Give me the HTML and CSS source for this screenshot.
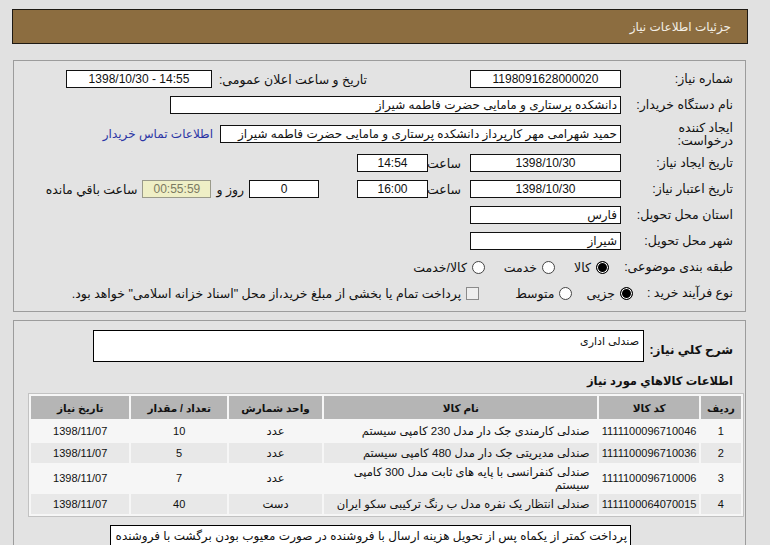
FILE: index.html
```html
<!DOCTYPE html>
<html lang="fa" dir="rtl">
<head>
<meta charset="utf-8">
<title>جزئیات اطلاعات نیاز</title>
<link rel="stylesheet" href="styles.css">
</head>
<body>
<div class="page">
  <div class="titlebar">جزئیات اطلاعات نیاز</div>

  <div class="panel info">
    <div class="row">
      <div class="lbl">شماره نیاز:</div>
      <div class="box w150 center">1198091628000020</div>
      <div class="lbl2">تاریخ و ساعت اعلان عمومی:</div>
      <div class="box w145 center ltr">1398/10/30 - 14:55</div>
    </div>
    <div class="row">
      <div class="lbl">نام دستگاه خریدار:</div>
      <div class="box w450">دانشکده پرستاری و مامایی حضرت فاطمه شیراز</div>
    </div>
    <div class="row tall">
      <div class="lbl two-line">ایجاد کننده<br>درخواست:</div>
      <div class="box w400">حمید شهرامی مهر کارپرداز دانشکده پرستاری و مامایی حضرت فاطمه شیراز</div>
      <a class="link" href="#">اطلاعات تماس خریدار</a>
    </div>
    <div class="row">
      <div class="lbl">تاریخ ایجاد نیاز:</div>
      <div class="box w150 center">1398/10/30</div>
      <div class="sep">ساعت</div>
      <div class="box w70 center">14:54</div>
    </div>
    <div class="row">
      <div class="lbl">تاریخ اعتبار نیاز:</div>
      <div class="box w150 center">1398/10/30</div>
      <div class="sep">ساعت</div>
      <div class="box w70 center">16:00</div>
      <div class="box w69 center days">0</div>
      <div class="txt">روز و</div>
      <div class="box remain center">00:55:59</div>
      <div class="txt">ساعت باقي مانده</div>
    </div>
    <div class="row">
      <div class="lbl">استان محل تحویل:</div>
      <div class="box w150">فارس</div>
    </div>
    <div class="row">
      <div class="lbl">شهر محل تحویل:</div>
      <div class="box w150">شیراز</div>
    </div>
    <div class="row">
      <div class="lbl cat">طبقه بندی موضوعی:</div>
      <div class="opt"><span class="radio on"></span>کالا</div>
      <div class="opt"><span class="radio"></span>خدمت</div>
      <div class="opt"><span class="radio"></span>کالا/خدمت</div>
    </div>
    <div class="row">
      <div class="lbl proc">نوع فرآیند خرید :</div>
      <div class="opt tight"><span class="radio on"></span>جزیی</div>
      <div class="opt"><span class="radio"></span>متوسط</div>
      <div class="opt wide"><span class="check"></span>پرداخت تمام یا بخشی از مبلغ خرید،از محل "اسناد خزانه اسلامی" خواهد بود.</div>
    </div>
  </div>

  <div class="panel items">
    <div class="descrow">
      <div class="dlbl">شرح کلي نیاز:</div>
      <div class="descbox">صندلی اداری</div>
    </div>
    <div class="heading">اطلاعات کالاهاي مورد نیاز</div>
    <table class="grid">
      <thead>
        <tr>
          <th class="c-idx">ردیف</th>
          <th class="c-code">کد کالا</th>
          <th class="c-name">نام کالا</th>
          <th class="c-unit">واحد شمارش</th>
          <th class="c-qty">تعداد / مقدار</th>
          <th class="c-date">تاریخ نیاز</th>
        </tr>
      </thead>
      <tbody>
        <tr class="odd">
          <td>1</td>
          <td class="code">1111100096710046</td>
          <td class="name">صندلی کارمندی جک دار مدل 230 کامپی سیستم</td>
          <td class="unit">عدد</td>
          <td>10</td>
          <td>1398/11/07</td>
        </tr>
        <tr class="even">
          <td>2</td>
          <td class="code">1111100096710036</td>
          <td class="name">صندلی مدیریتی جک دار مدل 480 کامپی سیستم</td>
          <td class="unit">عدد</td>
          <td>5</td>
          <td>1398/11/07</td>
        </tr>
        <tr class="odd two">
          <td>3</td>
          <td class="code">1111100096710006</td>
          <td class="name">صندلی کنفرانسی با پایه های ثابت مدل 300 کامپی سیستم</td>
          <td class="unit">عدد</td>
          <td>7</td>
          <td>1398/11/07</td>
        </tr>
        <tr class="even">
          <td>4</td>
          <td class="code">1111100064070015</td>
          <td class="name">صندلی انتظار یک نفره مدل ب رنگ ترکیبی سکو ایران</td>
          <td class="unit">دست</td>
          <td>40</td>
          <td>1398/11/07</td>
        </tr>
      </tbody>
    </table>
    <div class="note">پرداخت کمتر از یکماه پس از تحویل هزینه ارسال با فروشنده در صورت معیوب بودن برگشت با فروشنده</div>
  </div>
</div>
</body>
</html>
```

FILE: styles.css
```css
html, body {
  margin: 0;
  padding: 0;
  background: #e1e1e1;
}
body {
  direction: rtl;
  font-family: "Liberation Sans", "DejaVu Sans", sans-serif;
  font-size: 12px;
  color: #111;
  overflow: hidden;
}
.page {
  padding: 9px 22px 0 12px;
}
.titlebar {
  height: 33px;
  background: #8c6d40;
  border: 1px solid #1e1a14;
  color: #f3efe6;
  font-size: 12px;
  display: flex;
  align-items: center;
  padding-right: 16px;
}
.panel {
  border: 1px solid #9c9c9c;
  margin: 16px 2px 0 1px;
  background: #e3e3e3;
}
.info {
  height: 240px;
  padding: 5px 12px 5px 0;
  font-size: 12.5px;
}
.row {
  height: 26px;
  display: flex;
  align-items: center;
  white-space: nowrap;
}
.row.tall {
  height: 32px;
}
.lbl {
  width: 112px;
  flex: none;
  line-height: 15px;
}
.lbl.two-line {
  line-height: 13px;
  padding-top: 2px;
}
.lbl.cat {
  width: 117px;
  margin-left: 7px;
}
.lbl.proc {
  width: 94px;
  margin-left: 6px;
}
.box {
  height: 16px;
  line-height: 16px;
  border: 1px solid #111;
  background: #fff;
  padding: 0 3px;
  font-size: 12px;
  white-space: nowrap;
  overflow: hidden;
  flex: none;
}
.center { text-align: center; }
.ltr { direction: ltr; }
.w150 { width: 143px; }
.w145 { width: 138px; }
.w450 { width: 443px; }
.w400 { width: 393px; }
.w70 { width: 63px; }
.w69 { width: 62px; }
.lbl2 {
  width: 155px;
  margin-right: 103px;
  padding-left: 4px;
  box-sizing: border-box;
  flex: none;
}
.link {
  color: #2b35a5;
  text-decoration: none;
  margin-right: 7px;
  font-size: 12px;
}
.sep {
  width: 42px;
  padding-right: 9px;
  box-sizing: border-box;
  flex: none;
}
.days { margin-right: 38px; }
.txt {
  margin: 0 5px;
  flex: none;
}
.remain {
  width: 61px;
  background: #efefc6;
  border-color: #9a9a8a;
  color: #7b7a62;
}
.opt {
  display: flex;
  align-items: center;
  gap: 5px;
  margin-left: 19px;
}
.opt.tight { margin-left: 14px; }
.opt.wide { margin-right: 17px; }
.radio {
  width: 11px;
  height: 11px;
  border: 1px solid #444;
  border-radius: 50%;
  background: #fff;
  flex: none;
}
.radio.on {
  background: #000;
  border-color: #000;
  box-shadow: inset 0 0 0 1px #fff;
}
.check {
  width: 11px;
  height: 11px;
  border: 1px solid #8a8a8a;
  background: #eee;
  flex: none;
}
.items {
  margin-top: 8px;
  height: 240px;
  padding: 9px 0 0 14px;
}
.descrow {
  display: flex;
  align-items: center;
  padding-right: 12px;
}
.dlbl {
  width: 89px;
  flex: none;
  font-weight: bold;
  font-size: 12px;
  padding-top: 8px;
}
.descbox {
  width: 541px;
  height: 30px;
  border: 1px solid #000;
  background: #fff;
  padding: 0 4px;
  font-size: 11px;
  line-height: 20px;
}
.heading {
  font-weight: bold;
  font-size: 11.5px;
  margin: 10px 12px 0 0;
  height: 18px;
  line-height: 18px;
}
.grid {
  margin-top: 3px;
  margin-right: 1px;
  width: 716px;
  border-collapse: separate;
  border-spacing: 2px;
  background: #f6f6f6;
  border: 1px solid #c2c2c2;
  table-layout: fixed;
  font-size: 11px;
}
.grid th {
  background: #b5b5b5;
  height: 23px;
  padding: 0;
  font-weight: bold;
  font-size: 10.5px;
}
.grid td {
  text-align: center;
  padding: 0 4px;
  height: 20px;
  line-height: 13px;
}
.grid td.code { padding: 0; }
.grid td.name { text-align: right; padding-right: 8px; font-size: 11.5px; }
.grid td.unit { font-size: 11.5px; }
.grid tr.two td { height: 27px; }
.grid tr.odd td { background: #f6f6f6; }
.grid tr.even td { background: #e8e8e8; }
.c-idx { width: 40px; }
.c-code { width: 99px; }
.c-name { width: 272px; }
.c-unit { width: 93px; }
.c-qty { width: 95px; }
.c-date { width: 98px; }
.note {
  margin: 8px 114px 0 0;
  width: 513px;
  min-height: 30px;
  border: 1px solid #000;
  background: #fff;
  padding: 2px 3px;
  font-size: 12px;
  line-height: 16px;
  white-space: nowrap;
  overflow: hidden;
}
```
